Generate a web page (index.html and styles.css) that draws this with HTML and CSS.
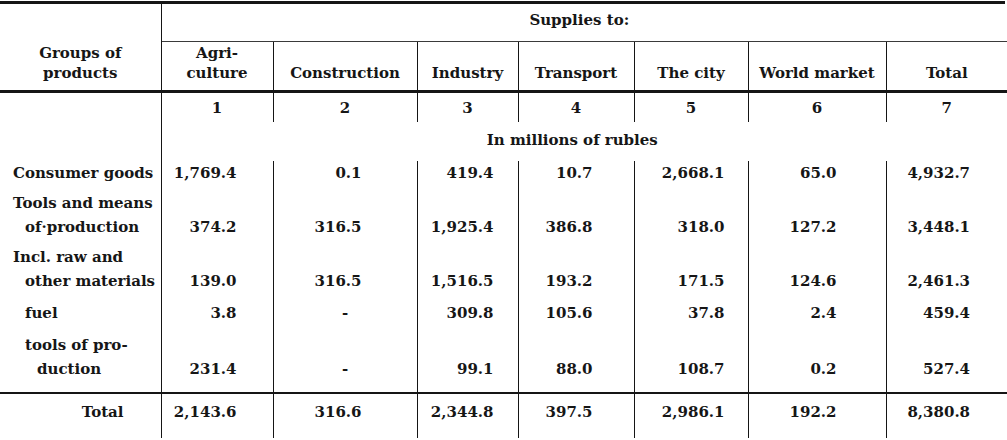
FILE: index.html
```html
<!DOCTYPE html>
<html lang="en">
<head>
<meta charset="utf-8">
<title>Supplies table</title>
<link rel="stylesheet" href="styles.css">
</head>
<body>
<div class="sheet">
  <div class="rule-top"></div>
  <table class="io">
    <colgroup>
      <col class="w0"><col class="w1"><col class="w2"><col class="w3"><col class="w4"><col class="w5"><col class="w6"><col class="w7">
    </colgroup>
    <tbody>
      <tr class="r-supplies">
        <td class="groups" rowspan="2"><div>Groups of</div><div>products</div></td>
        <td class="supplies" colspan="7">Supplies to:</td>
      </tr>
      <tr class="r-head">
        <td class="h"><div>Agri-</div><div>culture</div></td>
        <td class="h">Construction</td>
        <td class="h">Industry</td>
        <td class="h">Transport</td>
        <td class="h">The city</td>
        <td class="h">World market</td>
        <td class="h">Total</td>
      </tr>
      <tr class="r-num">
        <td class="c0"></td>
        <td>1</td><td>2</td><td>3</td><td>4</td><td>5</td><td>6</td><td>7</td>
      </tr>
      <tr class="r-unit">
        <td class="c0"></td>
        <td class="unit" colspan="7">In millions of rubles</td>
      </tr>
      <tr class="r-data first">
        <td class="label"><div class="l-main">Consumer goods</div></td>
        <td class="n1">1,769.4</td><td class="n2">0.1</td><td class="n3">419.4</td><td class="n4">10.7</td><td class="n5">2,668.1</td><td class="n6">65.0</td><td class="n7">4,932.7</td>
      </tr>
      <tr class="r-data">
        <td class="label"><div class="l-main">Tools and means</div><div class="l-cont">of·production</div></td>
        <td class="n1">374.2</td><td class="n2">316.5</td><td class="n3">1,925.4</td><td class="n4">386.8</td><td class="n5">318.0</td><td class="n6">127.2</td><td class="n7">3,448.1</td>
      </tr>
      <tr class="r-data">
        <td class="label"><div class="l-main">Incl. raw and</div><div class="l-cont">other materials</div></td>
        <td class="n1">139.0</td><td class="n2">316.5</td><td class="n3">1,516.5</td><td class="n4">193.2</td><td class="n5">171.5</td><td class="n6">124.6</td><td class="n7">2,461.3</td>
      </tr>
      <tr class="r-data sub">
        <td class="label"><div class="l-sub">fuel</div></td>
        <td class="n1">3.8</td><td class="n2 dash">-</td><td class="n3">309.8</td><td class="n4">105.6</td><td class="n5">37.8</td><td class="n6">2.4</td><td class="n7">459.4</td>
      </tr>
      <tr class="r-data sub last">
        <td class="label"><div class="l-sub">tools of pro-</div><div class="l-subcont">duction</div></td>
        <td class="n1">231.4</td><td class="n2 dash">-</td><td class="n3">99.1</td><td class="n4">88.0</td><td class="n5">108.7</td><td class="n6">0.2</td><td class="n7">527.4</td>
      </tr>
      <tr class="r-total">
        <td class="label total-label">Total</td>
        <td class="n1">2,143.6</td><td class="n2">316.6</td><td class="n3">2,344.8</td><td class="n4">397.5</td><td class="n5">2,986.1</td><td class="n6">192.2</td><td class="n7">8,380.8</td>
      </tr>
    </tbody>
  </table>
</div>
</body>
</html>
```

FILE: styles.css
```css
html, body {
  margin: 0;
  padding: 0;
  background: #ffffff;
}

body {
  color: #161616;
  font-family: "DejaVu Serif", "Liberation Serif", serif;
  font-size: 15px;
  font-weight: bold;
}

.sheet {
  width: 1007px;
  padding-top: 1px;
}

.rule-top {
  height: 3px;
  background: #151515;
  margin-right: 2px;
}

.io {
  width: 1007px;
  table-layout: fixed;
  border-collapse: collapse;
  border-spacing: 0;
}

.w0 { width: 161px; }
.w1 { width: 112px; }
.w2 { width: 144px; }
.w3 { width: 101px; }
.w4 { width: 116px; }
.w5 { width: 114px; }
.w6 { width: 138px; }
.w7 { width: 121px; }

.io td {
  padding: 0;
  line-height: 24px;
  white-space: nowrap;
}

/* header */
.groups {
  text-align: center;
  vertical-align: bottom;
  line-height: 20px !important;
  padding-bottom: 7px !important;
  border-right: 1px solid #151515;
  border-bottom: 3px solid #151515;
}

.supplies {
  text-align: center;
  padding: 4px 10px 9px 0 !important;
  border-bottom: 1px solid #3a3a3a;
}

.r-head .h {
  text-align: center;
  vertical-align: bottom;
  line-height: 20px;
  padding: 1px 0 7px 0;
  border-left: 1px solid #151515;
  border-bottom: 3px solid #151515;
}

.r-num td {
  text-align: center;
  padding: 3px 0 2px 0;
  border-left: 1px solid #151515;
}

.r-num .c0,
.r-unit .c0 {
  border-left: 0;
  border-right: 1px solid #151515;
}

.unit {
  text-align: center;
  padding: 6px 24px 9px 0 !important;
}

/* data rows */
.r-data td,
.r-total td {
  text-align: right;
  vertical-align: bottom;
  border-left: 1px solid #151515;
}

.r-data td { padding-top: 6px; }
.r-data.first td { padding-top: 0; }
.r-data.sub td { padding-top: 8px; }
.r-data.last td { padding-bottom: 11px; }

.io .label {
  text-align: left;
  border-left: 0;
  border-right: 1px solid #151515;
}

.l-main { padding-left: 13px; }
.l-cont { padding-left: 25px; }
.l-sub { padding-left: 25px; }
.l-subcont { padding-left: 37px; }

.r-total td {
  border-top: 2px solid #151515;
  padding-top: 6px;
  padding-bottom: 14px;
}

.io .total-label {
  text-align: right;
  padding-right: 37px;
}

.n1 { padding-right: 36px !important; }
.n2 { padding-right: 55px !important; }
.n3 { padding-right: 24px !important; }
.n4 { padding-right: 41px !important; }
.n5 { padding-right: 23px !important; }
.n6 { padding-right: 49px !important; }
.n7 { padding-right: 37px !important; }

.io .dash {
  text-align: center;
  padding-right: 0 !important;
}
```
